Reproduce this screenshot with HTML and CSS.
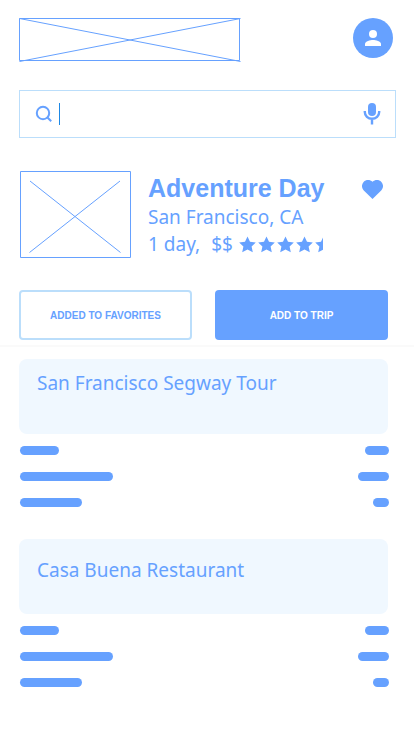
FILE: index.html
```html
<!DOCTYPE html>
<html lang="en">
<head>
<meta charset="utf-8">
<meta name="viewport" content="width=device-width, initial-scale=1">
<title>Adventure Day</title>
<link rel="stylesheet" href="styles.css">
</head>
<body>
<header class="top">
  <svg class="logo" viewBox="0 0 222 44" aria-hidden="true">
    <path d="M.5 .5H220.500V42.500H.5ZM.5 .5L221.500 43.500M.5 43.500L221.500 .5"/>
  </svg>
  <button class="avatar" aria-label="Account">
    <svg width="40" height="40" viewBox="0 0 40 40"><circle cx="20" cy="16" r="4"/><path d="M12 28v-2c0-2.700 5.300-4 8-4s8 1.300 8 4v2z"/></svg>
  </button>
</header>

<form class="search">
  <svg class="lens" width="18" height="18" viewBox="0 0 18 18" aria-hidden="true"><circle cx="8" cy="8" r="6.200"/><path d="M12 12l4.200 4.200"/></svg>
  <span class="caret"></span>
  <input class="query" type="text" aria-label="Search">
  <button class="mic" type="button" aria-label="Voice search">
    <svg width="18" height="24" viewBox="0 0 18 24"><rect x="5" y="1" width="8" height="13" rx="4"/><path class="stand" d="M1.800 9v1a7.200 6.800 0 0 0 14.400 0V9M9 17v5.500"/></svg>
  </button>
</form>

<main>
  <section class="trip">
    <svg class="thumb" viewBox="0 0 111 87" aria-hidden="true">
      <path d="M.5 .5H110.500V86.500H.5ZM10 10L100.500 81.500M100 10L9.500 81.500"/>
    </svg>
    <div class="info">
      <h1>Adventure Day</h1>
      <p>San Francisco, CA</p>
      <p class="facts"><span>1 day,</span><span>$$</span>
        <svg class="stars" width="84" height="17" viewBox="0 0 84 17" role="img" aria-label="4.5 stars">
          <defs><path id="star" d="M8.500 .5l2.500 5.200 5.800.7-4.200 4 1.200 5.900-5.300-2.700-5.300 2.700 1.200-5.900-4.200-4 5.800-.7z"/></defs>
          <use href="#star"/><use href="#star" x="19"/><use href="#star" x="38"/><use href="#star" x="57"/><use href="#star" x="76"/>
        </svg>
      </p>
    </div>
    <button class="like" aria-label="Favorite">
      <svg width="21" height="19" viewBox="0 0 21 19"><path d="M10.500 19L1.800 10.500C-.6 8-.6 4.200 1.600 1.900 4-.6 8-.6 10.500 1.800 13-.6 17-.6 19.400 1.900c2.200 2.300 2.200 6.100-.2 8.600z"/></svg>
    </button>
  </section>

  <div class="actions">
    <button class="outline">ADDED TO FAVORITES</button>
    <button class="solid">ADD TO TRIP</button>
  </div>

  <section class="stop">
    <h2 class="card">San Francisco Segway Tour</h2>
    <div class="row"><i class="bar short"></i><i class="bar end-mid"></i></div>
    <div class="row"><i class="bar long"></i><i class="bar end-long"></i></div>
    <div class="row"><i class="bar mid"></i><i class="bar end-short"></i></div>
  </section>
  <section class="stop">
    <h2 class="card roomy">Casa Buena Restaurant</h2>
    <div class="row"><i class="bar short"></i><i class="bar end-mid"></i></div>
    <div class="row"><i class="bar long"></i><i class="bar end-long"></i></div>
    <div class="row"><i class="bar mid"></i><i class="bar end-short"></i></div>
  </section>
</main>
</body>
</html>
```
FILE: styles.css
```css
:root {
  --blue: #66a1ff;
  --pale: #bbdefb;
  --tint: #f0f8ff;
}
* { box-sizing: border-box; }
body {
  margin: 0;
  background: #fff;
  color: var(--blue);
  font-family: "Noto Sans", sans-serif;
  font-size: 19px;
}
h1, h2, p { margin: 0; font-weight: 400; }
svg { display: block; fill: var(--blue); }
button {
  padding: 0;
  border: 0;
  background: none;
  color: inherit;
  font: bold 10px "Liberation Sans", sans-serif;
}
.logo, .thumb { fill: none; stroke: var(--blue); }

.top {
  display: flex;
  justify-content: space-between;
  align-items: flex-start;
  padding: 18px 21px 0 19px;
}
.logo { width: 222px; height: 44px; }
.avatar { border-radius: 50%; background: var(--blue); }
.avatar svg { fill: #fff; }

.search {
  display: flex;
  align-items: center;
  height: 48px;
  margin: 28px 18px 0 19px;
  padding: 0 14px 0 15px;
  border: 1px solid var(--pale);
}
.lens { fill: none; stroke: var(--blue); stroke-width: 2; }
.caret { width: 1px; height: 22px; margin-left: 6px; background: #1e88e5; }
.query {
  flex: 1;
  min-width: 0;
  border: 0;
  outline: 0;
  background: none;
  color: inherit;
  font: inherit;
}
.stand { fill: none; stroke: var(--blue); stroke-width: 2.4; }

.trip {
  display: flex;
  align-items: flex-start;
  margin: 33px 31px 0 20px;
}
.thumb { width: 111px; height: 87px; }
.info { flex: 1; margin-left: 17px; padding-top: 4px; }
h1 { margin-bottom: 2px; font: bold 25px/27px "Liberation Sans", sans-serif; }
.info p { line-height: 27px; white-space: nowrap; }
.facts { display: flex; align-items: center; }
.facts span { margin-right: 11px; }
.facts span + span { margin-right: 6px; }
.like { margin-top: 9px; }

.actions {
  display: grid;
  grid-template-columns: 1fr 1fr;
  gap: 23px;
  padding: 32px 26px 5px 19px;
  border-bottom: 2px solid #fafafa;
}
.actions button { height: 50px; border-radius: 4px; }
.outline { border: 2px solid var(--pale); }
.solid { background: var(--blue); color: #fff; }

.stop { margin: 12px 26px 32px 19px; }
.card {
  height: 75px;
  margin-bottom: 12px;
  padding: 11px 18px;
  border-radius: 8px;
  background: var(--tint);
  font-size: 19px;
  line-height: 27px;
}
.roomy { padding-top: 18px; }
.row {
  display: flex;
  justify-content: space-between;
  margin: 0 -1px 17px 1px;
}
.bar { height: 9px; border-radius: 5px; background: var(--blue); }
.short { width: 39px; }
.mid { width: 62px; }
.long { width: 93px; }
.end-short { width: 16px; }
.end-mid { width: 24px; }
.end-long { width: 31px; }
```
